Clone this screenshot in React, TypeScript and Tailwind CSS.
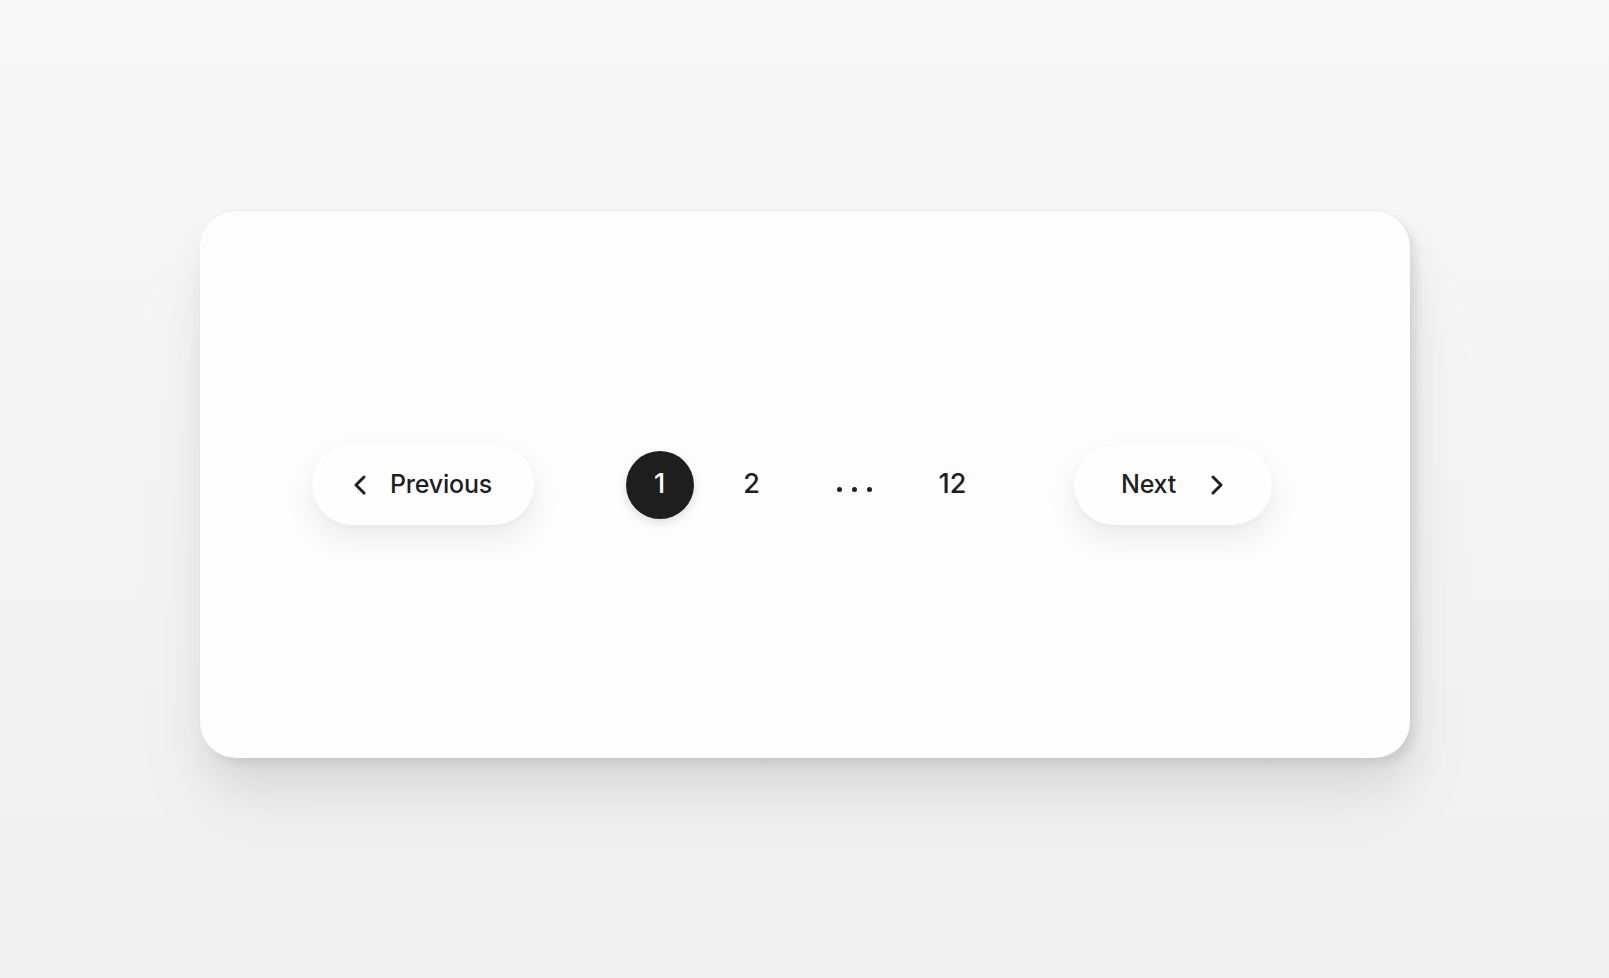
import { useState } from 'react';

const font = { fontFamily: 'Inter, "Noto Sans", sans-serif' };

function Chevron({ dir }: { dir: 'left' | 'right' }) {
  return (
    <svg width="14" height="20" viewBox="0 0 14 20" fill="none" className="shrink-0">
      <path
        d={dir === 'left' ? 'M11 2L3 10L11 18' : 'M3 2L11 10L3 18'}
        stroke="#1f1f1f"
        strokeWidth="3"
        strokeLinecap="round"
        strokeLinejoin="round"
      />
    </svg>
  );
}

export default function App() {
  const [page, setPage] = useState(1);
  const total = 12;

  return (
    <div
      className="h-screen w-full flex justify-center pt-[211px] bg-gradient-to-b from-[#f8f8f8] to-[#f0f0f0]"
      style={font}
    >
      <div className="w-[1210px] h-[547px] rounded-[36px] bg-[#fdfdfd] shadow-[0_-1px_2px_rgba(0,0,0,0.03),6px_6px_8px_rgba(0,0,0,0.08),4px_26px_40px_rgba(0,0,0,0.08),0_56px_90px_rgba(0,0,0,0.04)] flex items-center pl-[112px]">
        <div className="flex items-center">
          {/* Previous */}
          <button
            onClick={() => setPage((p) => Math.max(1, p - 1))}
            className="w-[222px] h-[81px] rounded-full bg-[#fefefe] flex items-center justify-center gap-[23px] shadow-[0_14px_30px_rgba(0,0,0,0.07),0_2px_6px_rgba(0,0,0,0.03)]"
          >
            <Chevron dir="left" />
            <span className="text-[25px] font-medium text-[#1f1f1f] tracking-[-0.2px]">Previous</span>
          </button>

          {/* Pages */}
          <div className="flex items-center gap-[24px] ml-[92px] mr-[92px]">
            <button
              onClick={() => setPage(1)}
              className={
                page === 1
                  ? 'w-[68px] h-[68px] rounded-full bg-[#1e1e1e] text-white flex items-center justify-center text-[27px] font-medium shadow-[0_4px_10px_rgba(0,0,0,0.12)]'
                  : 'w-[68px] h-[68px] rounded-full text-[#1f1f1f] flex items-center justify-center text-[27px] font-medium'
              }
            >
              1
            </button>
            <button
              onClick={() => setPage(2)}
              className={
                page === 2
                  ? 'w-[68px] h-[68px] rounded-full bg-[#1e1e1e] text-white flex items-center justify-center text-[27px] font-medium'
                  : 'w-[68px] h-[68px] rounded-full text-[#1f1f1f] flex items-center justify-center text-[27px] font-medium'
              }
            >
              2
            </button>
            <div className="w-[90px] h-[68px] flex items-center justify-center gap-[10px] pt-[9px]">
              <span className="w-[5px] h-[5px] rounded-full bg-[#1f1f1f]" />
              <span className="w-[5px] h-[5px] rounded-full bg-[#1f1f1f]" />
              <span className="w-[5px] h-[5px] rounded-full bg-[#1f1f1f]" />
            </div>
            <button
              onClick={() => setPage(total)}
              className={
                page === total
                  ? 'w-[58px] h-[68px] rounded-full bg-[#1e1e1e] text-white flex items-center justify-center text-[27px] font-medium'
                  : 'w-[58px] h-[68px] text-[#1f1f1f] flex items-center justify-center text-[27px] font-medium'
              }
            >
              {total}
            </button>
          </div>

          {/* Next */}
          <button
            onClick={() => setPage((p) => Math.min(total, p + 1))}
            className="w-[198px] h-[80px] rounded-full bg-[#fefefe] flex items-center justify-center gap-[34px] shadow-[0_14px_30px_rgba(0,0,0,0.07),0_2px_6px_rgba(0,0,0,0.03)]"
          >
            <span className="text-[25px] font-medium text-[#1f1f1f] tracking-[-0.2px]">Next</span>
            <Chevron dir="right" />
          </button>
        </div>
      </div>
    </div>
  );
}
